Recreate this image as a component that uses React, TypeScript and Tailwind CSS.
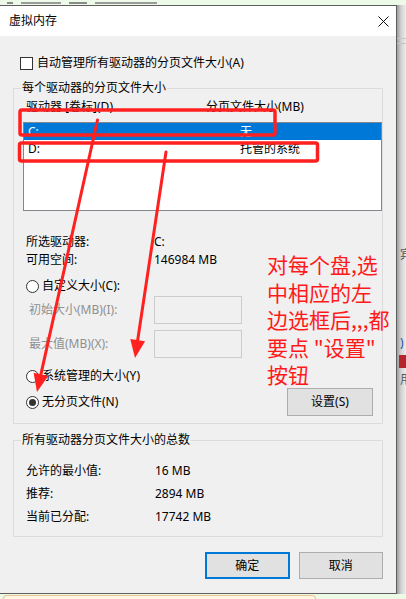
import React from "react";

type Pt = [number, number];

const arrowParts = (from: Pt, tip: Pt) => {
  const dx = tip[0] - from[0];
  const dy = tip[1] - from[1];
  const len = Math.hypot(dx, dy);
  const ux = dx / len;
  const uy = dy / len;
  const bx = tip[0] - ux * 18;
  const by = tip[1] - uy * 18;
  const nx = -uy;
  const ny = ux;
  return {
    shaft: { x1: from[0], y1: from[1], x2: bx, y2: by },
    head: `${tip[0]},${tip[1]} ${bx + nx * 7.5},${by + ny * 7.5} ${bx - nx * 7.5},${by - ny * 7.5}`,
  };
};

const Radio = ({ checked }: { checked?: boolean }) => (
  <span className="flex h-[13px] w-[13px] shrink-0 items-center justify-center rounded-full border border-[#333333] bg-white">
    {checked && <span className="h-[7px] w-[7px] rounded-full bg-[#333333]" />}
  </span>
);

const Group = ({
  title,
  height,
  children,
}: {
  title: string;
  height: string;
  children: React.ReactNode;
}) => (
  <div className={`relative w-[370px] border border-[#dcdcdc] ${height}`}>
    <span className="absolute -top-[9px] left-[7px] bg-[#f0f0f0] px-[1px] leading-[16px]">
      {title}
    </span>
    {children}
  </div>
);

const Annotations = () => {
  const a1 = arrowParts([97.5, 120], [37, 392]);
  const a2 = arrowParts([166, 152], [135, 358]);
  const red = "#ff2020";
  return (
    <svg
      className="pointer-events-none absolute left-0 top-0"
      width={406}
      height={599}
      viewBox="0 0 406 599"
    >
      <rect x={20} y={110} width={255} height={25} rx={2} fill="none" stroke={red} strokeWidth={3.5} />
      <rect x={19.5} y={143} width={298} height={18} rx={2} fill="none" stroke={red} strokeWidth={3.5} />
      {[a1, a2].map((a, i) => (
        <g key={i}>
          <line {...a.shaft} stroke={red} strokeWidth={3} strokeLinecap="round" />
          <polygon points={a.head} fill={red} />
        </g>
      ))}
    </svg>
  );
};

const App = () => {
  return (
    <div className="relative flex h-[599px] w-[406px] flex-col overflow-hidden bg-[#eefae8] font-['Noto_Sans','Noto_Sans_CJK_SC',sans-serif] text-[12px] text-black">
      {/* strip of the window behind */}
      <div className="flex h-[5px] items-end gap-[8px] pb-[1px] pl-[7px]">
        <span className="h-[2px] w-[6px] bg-[#8a8a8a]" />
        <span className="h-[2px] w-[40px] bg-[#9a9a9a]" />
        <span className="h-[2px] w-[18px] bg-[#8a8a8a]" />
        <span className="h-[2px] w-[62px] bg-[#9a9a9a]" />
      </div>

      <div className="flex h-[589px]">
        {/* dialog */}
        <div className="flex w-[397px] flex-col border-y border-r border-[#5e5e5e]">
          <div className="flex h-[30px] shrink-0 items-center justify-between bg-white pl-[9px] pr-[7px]">
            <span className="leading-[16px]">虚拟内存</span>
            <svg width="11" height="11" viewBox="0 0 11 11">
              <path d="M0.5 0.5 L10.5 10.5 M10.5 0.5 L0.5 10.5" stroke="#111" strokeWidth="1" />
            </svg>
          </div>

          <div className="flex-1 bg-[#f0f0f0] px-[13px]">
            <div className="mt-[19px] flex h-[16px] items-center pl-[7px]">
              <span className="h-[13px] w-[13px] border border-[#333333] bg-white" />
              <span className="ml-[4px] leading-[16px]">自动管理所有驱动器的分页文件大小(A)</span>
            </div>

            <div className="mt-[17px]">
              <Group title="每个驱动器的分页文件大小" height="h-[336px]">
                <div className="mt-[10px] flex h-[16px] items-center pl-[12px] leading-[16px]">
                  <span className="w-[180px]">驱动器 [卷标](D)</span>
                  <span>分页文件大小(MB)</span>
                </div>

                <div className="ml-[9px] mt-[7px] h-[89px] w-[359px] border border-[#828790] bg-white">
                  <div className="flex h-[17px] items-center bg-[#0078d7] pl-[4px] leading-[16px] text-white">
                    <span className="w-[212px]">C:</span>
                    <span>无</span>
                  </div>
                  <div className="flex h-[17px] items-center pl-[4px] leading-[16px]">
                    <span className="w-[212px]">D:</span>
                    <span>托管的系统</span>
                  </div>
                </div>

                <div className="mt-[22px] pl-[12px] leading-[16px]">
                  <div className="flex h-[18px] items-center">
                    <span className="w-[128px]">所选驱动器:</span>
                    <span>C:</span>
                  </div>
                  <div className="flex h-[18px] items-center">
                    <span className="w-[128px]">可用空间:</span>
                    <span>146984 MB</span>
                  </div>
                </div>

                <div className="mt-[8px] flex h-[18px] items-center pl-[12px]">
                  <Radio />
                  <span className="ml-[3px] leading-[16px]">自定义大小(C):</span>
                </div>

                <div className="mt-[1px] flex h-[28px] items-center pl-[15px] text-[#8f8f8f]">
                  <span className="w-[125px] leading-[16px]">初始大小(MB)(I):</span>
                  <span className="h-[28px] w-[88px] border border-[#cccccc] bg-[#f0f0f0]" />
                </div>
                <div className="mt-[6px] flex h-[28px] items-center pl-[15px] text-[#8f8f8f]">
                  <span className="w-[125px] leading-[16px]">最大值(MB)(X):</span>
                  <span className="h-[28px] w-[88px] border border-[#cccccc] bg-[#f0f0f0]" />
                </div>

                <div className="mt-[9px] flex h-[18px] items-center pl-[12px]">
                  <Radio />
                  <span className="ml-[3px] leading-[16px]">系统管理的大小(Y)</span>
                </div>

                <div className="mt-[3px] flex h-[28px] items-center pl-[12px]">
                  <Radio checked />
                  <span className="ml-[3px] leading-[16px]">无分页文件(N)</span>
                  <button className="ml-auto mr-[9px] h-[28px] w-[86px] border border-[#adadad] bg-[#e1e1e1] leading-[16px]">
                    设置(S)
                  </button>
                </div>
              </Group>
            </div>

            <div className="mt-[16px]">
              <Group title="所有驱动器分页文件大小的总数" height="h-[97px]">
                <div className="mt-[18px] pl-[12px] leading-[16px]">
                  {[
                    ["允许的最小值:", "16 MB"],
                    ["推荐:", "2894 MB"],
                    ["当前已分配:", "17742 MB"],
                  ].map(([k, v]) => (
                    <div key={k} className="flex h-[23px] items-center">
                      <span className="w-[129px]">{k}</span>
                      <span>{v}</span>
                    </div>
                  ))}
                </div>
              </Group>
            </div>

            <div className="mt-[15px] flex">
              <button className="ml-[192px] h-[27px] w-[86px] border-2 border-[#0078d7] bg-[#e1e1e1] leading-[16px]">
                确定
              </button>
              <button className="ml-[9px] h-[27px] w-[86px] border border-[#adadad] bg-[#e1e1e1] leading-[16px]">
                取消
              </button>
            </div>
          </div>
        </div>

        {/* edge of the window behind */}
        <div className="flex w-[9px] flex-col overflow-hidden bg-[linear-gradient(to_right,#9c9c9c,#d2d2d2_45%,#ececec)] text-[12px] leading-[14px]">
          <div className="mt-[33px] h-px shrink-0 bg-[#c4c4c4]" />
          <div className="mt-[4px] h-px shrink-0 bg-[#c4c4c4]" />
          <div className="mt-[204px] h-[14px] shrink-0 pl-[3px] text-[#555555]">宾</div>
          <div className="mt-[74px] h-[14px] shrink-0 pl-[3px] text-[#1a4fa0]">)</div>
          <div className="ml-[2px] mt-[5px] h-[13px] shrink-0 bg-[#b5262b]" />
          <div className="mt-[5px] h-[14px] shrink-0 pl-[3px] text-[#555555]">用</div>
        </div>
      </div>

      {/* strip below the dialog */}
      <div className="flex h-[5px] items-end">
        <div className="ml-[3px] h-[4px] w-[313px] rounded-t-[6px] border border-b-0 border-[#e9c38f] bg-[#fff6e4]" />
      </div>

      <Annotations />

      <div className="absolute left-[267px] top-[251px] whitespace-nowrap font-['Noto_Sans_CJK_SC',sans-serif] text-[21px] leading-[27.5px] text-[#ff1a1a]">
        <div>对每个盘,选</div>
        <div>中相应的左</div>
        <div>边选框后,,,都</div>
        <div>要点 "设置"</div>
        <div>按钮</div>
      </div>
    </div>
  );
};

export default App;
